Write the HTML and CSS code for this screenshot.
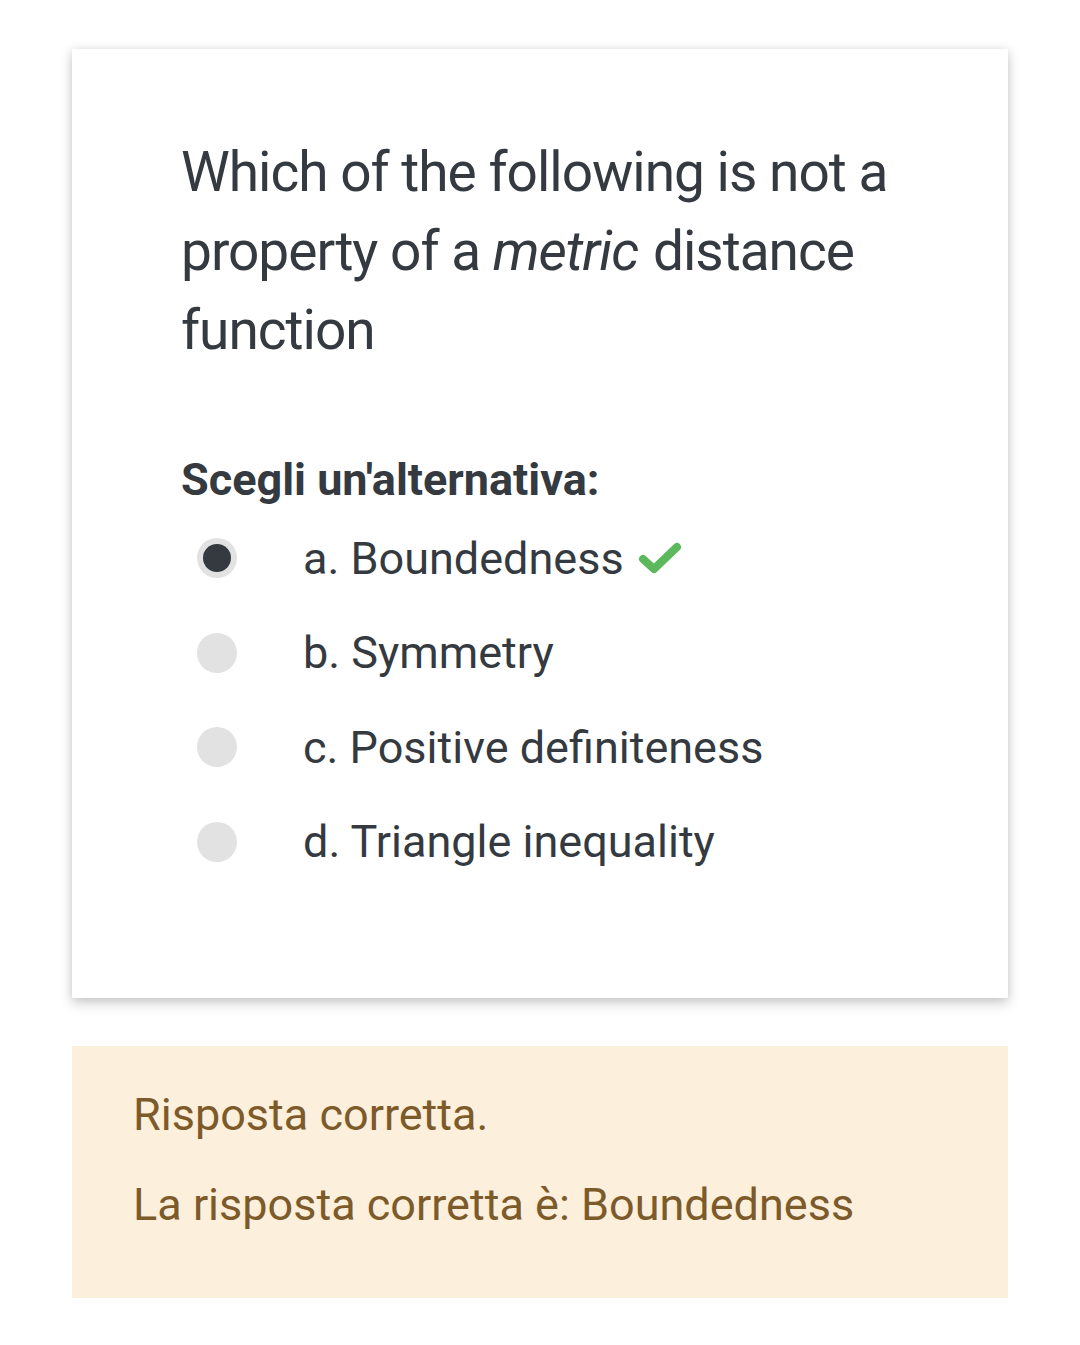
FILE: index.html
```html
<!DOCTYPE html>
<html lang="it">
<head>
<meta charset="utf-8">
<link rel="stylesheet" href="styles.css">
</head>
<body>
<div class="page">
  <div class="card">
    <p class="qtext">Which of the following is not a property of a <em>metric</em> distance function</p>
    <div class="prompt">Scegli un'alternativa:</div>
    <div class="answers">
      <div class="opt">
        <span class="radio checked"></span>
        <span class="label">a. Boundedness</span>
        <svg class="tick" viewBox="0 0 44 34" width="44" height="34"><path d="M5 18 L16 28 L39 6" fill="none" stroke="#5cb85c" stroke-width="8" stroke-linecap="round" stroke-linejoin="round"/></svg>
      </div>
      <div class="opt">
        <span class="radio"></span>
        <span class="label">b. Symmetry</span>
      </div>
      <div class="opt">
        <span class="radio"></span>
        <span class="label">c. Positive definiteness</span>
      </div>
      <div class="opt">
        <span class="radio"></span>
        <span class="label">d. Triangle inequality</span>
      </div>
    </div>
  </div>
  <div class="feedback">
    <div class="fb-line">Risposta corretta.</div>
    <div class="fb-line">La risposta corretta è: Boundedness</div>
  </div>
</div>
</body>
</html>
```
FILE: styles.css
```css
html, body {
  margin: 0;
  padding: 0;
  background: #ffffff;
}
body {
  font-family: Roboto, "Noto Sans", sans-serif;
  color: #343a40;
}
.page {
  padding: 49px 72px 0 72px;
}
.card {
  background: #fff;
  box-shadow: 0 5px 12px rgba(0,0,0,0.2), 0 0 8px rgba(0,0,0,0.08);
  padding: 84px 109px 0 109px;
  height: 865px;
}
.qtext {
  margin: 0;
  font-size: 55px;
  letter-spacing: -1px;
  line-height: 79px;
  color: #343a40;
}
.qtext em {
  display: inline-block;
  font-style: italic;
  padding-right: 2px;
}
.prompt {
  margin-top: 75px;
  font-size: 45px;
  font-weight: 700;
  line-height: 70px;
}
.answers {
  margin-top: -4px;
  display: flex;
  flex-direction: column;
}
.opt {
  display: flex;
  align-items: center;
  height: 94.5px;
}
.radio {
  width: 40px;
  height: 40px;
  border-radius: 50%;
  background: #e2e2e2;
  margin-left: 16px;
  margin-right: 66px;
  flex: none;
  display: flex;
  align-items: center;
  justify-content: center;
}
.radio.checked::after {
  content: "";
  width: 28px;
  height: 28px;
  border-radius: 50%;
  background: #343a40;
}
.label {
  font-size: 45px;
}
.tick {
  margin-left: 14px;
}
.feedback {
  margin-top: 48px;
  background: #fcefdc;
  color: #7d5a29;
  padding: 24px 61px 0 61px;
  height: 228px;
}
.fb-line {
  font-size: 45px;
  line-height: 90px;
}
```
